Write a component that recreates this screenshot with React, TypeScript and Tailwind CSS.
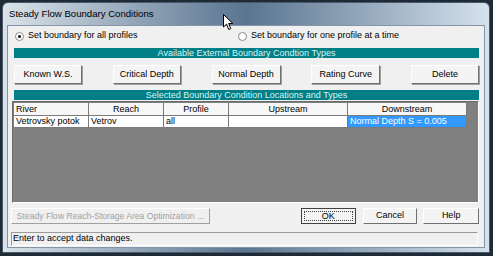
import React from 'react';

const font = { fontFamily: '"Liberation Sans", Arial, sans-serif' };

const Radio: React.FC<{ checked?: boolean; label: string }> = ({ checked, label }) => (
  <div className="flex items-center gap-[4px]">
    <span className="w-[9px] h-[9px] rounded-full border border-[#8a8a8a] bg-white flex items-center justify-center">
      {checked && <span className="w-[3px] h-[3px] rounded-full bg-black" />}
    </span>
    <span>{label}</span>
  </div>
);

const Btn: React.FC<{ label: string; className?: string }> = ({ label, className = '' }) => (
  <div
    className={`h-[19px] flex items-center justify-center bg-[#f4f4f4] border border-t-white border-l-white border-r-[#707070] border-b-[#707070] shadow-[1px_1px_0_#a0a0a0] ${className}`}
  >
    {label}
  </div>
);

const TealBar: React.FC<{ label: string }> = ({ label }) => (
  <div className="ml-[3px] h-[10px] bg-[#007f86] text-[#d6f6f6] flex items-center justify-center leading-none">
    {label}
  </div>
);

const cols = [
  { name: 'River', w: 'w-[75px]', align: 'text-left' },
  { name: 'Reach', w: 'w-[75px]', align: 'text-center' },
  { name: 'Profile', w: 'w-[65px]', align: 'text-center' },
  { name: 'Upstream', w: 'w-[119px]', align: 'text-center' },
  { name: 'Downstream', w: 'w-[119px]', align: 'text-center' },
];

const row = ['Vetrovsky potok', 'Vetrov', 'all', '', 'Normal Depth S = 0.005'];

export default function App() {
  return (
    <div className="w-[493px] h-[256px] bg-[#1e2a36] relative overflow-hidden text-[9px] text-black" style={font}>
      <div className="absolute left-[2px] top-[2px] w-[488px] h-[251px] rounded-t-[6px] border border-[#4a5a6c] bg-gradient-to-r from-[#dbe3ea] via-[#5a7590] to-[#d6e2ec] flex flex-col px-[4px] pb-[4px]">
        <div className="h-[22px] flex items-center pl-[2px] text-[9.6px] text-black">Steady Flow Boundary Conditions</div>
        <div className="flex-1 bg-[#f0f0f0] border border-[#8496a8] flex flex-col pr-[5px] pl-[3px]">
          <div className="mt-[4px] h-[12px] flex items-center">
            <div className="ml-[4px] w-[223px]">
              <Radio checked label="Set boundary for all profiles" />
            </div>
            <Radio label="Set boundary for one profile at a time" />
          </div>
          <div className="mt-[6px]">
            <TealBar label="Available External Boundary Condtion Types" />
          </div>
          <div className="mt-[7px] ml-[3px] flex justify-between">
            <Btn label="Known W.S." className="w-[68px]" />
            <Btn label="Critical Depth" className="w-[68px]" />
            <Btn label="Normal Depth" className="w-[69px]" />
            <Btn label="Rating Curve" className="w-[69px]" />
            <Btn label="Delete" className="w-[68px]" />
          </div>
          <div className="mt-[6px]">
            <TealBar label="Selected Boundary Condition Locations and Types" />
          </div>
          <div className="mt-[1px] ml-[1px] h-[102px] bg-[#808080] border-t border-l border-t-[#696969] border-l-[#696969] border-r border-b border-r-white border-b-white pt-[1px] pl-[1px]">
            <div className="flex">
              {cols.map((c) => (
                <div key={c.name} className={`${c.w} h-[13px] bg-[#f7f7f7] border-r border-b border-[#7a7a7a] px-[2px] leading-[12px] ${c.align}`}>
                  {c.name}
                </div>
              ))}
            </div>
            <div className="flex">
              {cols.map((c, i) => (
                <div
                  key={c.name}
                  className={`${c.w} h-[12px] border-r border-b border-[#7a7a7a] px-[2px] leading-[11px] ${i === 4 ? 'bg-[#3399ff] text-white' : 'bg-white'}`}
                >
                  {row[i]}
                </div>
              ))}
            </div>
          </div>
          <div className="mt-[5px] flex items-center">
            <div className="w-[200px] h-[16px] flex items-center justify-center whitespace-nowrap text-[8.6px] bg-[#f0f0f0] text-[#a0a0a0] border border-t-white border-l-white border-r-[#a0a0a0] border-b-[#a0a0a0]">
              Steady Flow Reach-Storage Area Optimization ...
            </div>
            <div className="ml-[91px] w-[55px] h-[16px] p-[2px] bg-[#f4f4f4] border border-[#404040]">
              <div className="w-full h-full border border-dotted border-[#404040] flex items-center justify-center leading-none">OK</div>
            </div>
            <div className="ml-[7px] w-[55px] h-[16px] flex items-center justify-center bg-[#f4f4f4] border border-t-white border-l-white border-r-[#707070] border-b-[#707070]">
              Cancel
            </div>
            <div className="ml-[6px] w-[56px] h-[16px] flex items-center justify-center bg-[#f4f4f4] border border-t-white border-l-white border-r-[#707070] border-b-[#707070]">
              Help
            </div>
          </div>
          <div className="mt-[8px] mr-[1px] h-[14px] flex items-center px-[1px] border-t border-l border-t-[#9a9a9a] border-l-[#9a9a9a] border-b border-r border-b-white border-r-white">
            Enter to accept data changes.
          </div>
        </div>
      </div>
      <svg className="absolute left-[223px] top-[14px]" width="12" height="17" viewBox="0 0 12 17">
        <path d="M0.5 0.5 L0.5 13 L3.5 10.2 L5.8 15.5 L7.8 14.6 L5.6 9.5 L9.8 9.5 Z" fill="white" stroke="black" strokeWidth="1" />
      </svg>
    </div>
  );
}
